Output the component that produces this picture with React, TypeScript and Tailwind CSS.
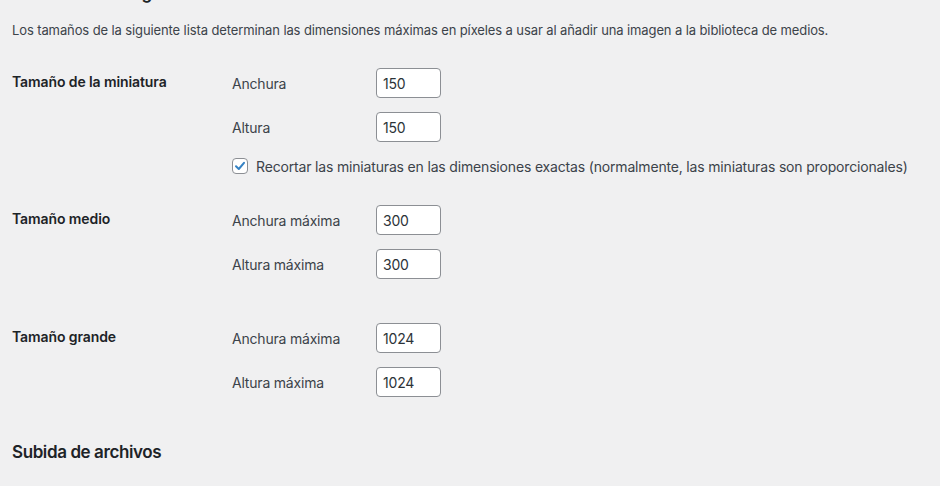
import React from "react";

const font = { fontFamily: "Inter, 'Noto Sans', sans-serif" };

function NumInput({ value }: { value: string }) {
  return (
    <input
      type="text"
      defaultValue={value}
      className="w-[65px] h-[30px] rounded-[4px] border border-[#8c8f94] bg-white pl-[6px] text-[14px] tracking-[-0.2px] text-[#2c3338] outline-none"
    />
  );
}

function Field({ label, value }: { label: string; value: string }) {
  return (
    <div className="flex items-center h-[30px]">
      <span className="w-[144px] text-[14px] tracking-[-0.2px] text-[#3c434a]">{label}</span>
      <NumInput value={value} />
    </div>
  );
}

function Row({
  title,
  children,
  pb,
}: {
  title: string;
  children: React.ReactNode;
  pb: string;
}) {
  return (
    <div className={`flex ${pb}`}>
      <div className="w-[220px] pt-[20px] text-[14px] leading-[18px] tracking-[-0.1px] font-semibold text-[#1d2327]">
        {title}
      </div>
      <div className="flex flex-col gap-[14px] pt-[15px]">{children}</div>
    </div>
  );
}

export default function App() {
  return (
    <div
      className="w-[940px] h-[486px] overflow-hidden bg-[#f0f0f1] px-[12px]"
      style={font}
    >
      <h2 className="mt-[-17px] h-[20px] leading-[20px] text-[17px] tracking-[-0.3px] font-semibold text-[#1d2327]">
        Tamaños de imagen
      </h2>
      <p className="mt-[17px] h-[20px] leading-[20px] text-[13px] tracking-[-0.11px] text-[#3c434a]">
        Los tamaños de la siguiente lista determinan las dimensiones máximas en píxeles a usar al añadir una imagen a la biblioteca de medios.
      </p>
      <div className="h-[13px]" />
      <Row title="Tamaño de la miniatura" pb="pb-[16px]">
        <Field label="Anchura" value="150" />
        <Field label="Altura" value="150" />
        <label className="flex items-center gap-[8px] mt-[2px] h-[16px] text-[14px] tracking-[-0.17px] text-[#3c434a]">
          <span className="flex items-center justify-center w-[16px] h-[16px] rounded-[4px] border border-[#8c8f94] bg-white">
            <svg width="14" height="14" viewBox="0 0 14 14">
              <path
                d="M3 7.2 L5.8 10 L11 3.8"
                fill="none"
                stroke="#3582c4"
                strokeWidth="2"
                strokeLinecap="round"
                strokeLinejoin="round"
              />
            </svg>
          </span>
          Recortar las miniaturas en las dimensiones exactas (normalmente, las miniaturas son proporcionales)
        </label>
      </Row>
      <Row title="Tamaño medio" pb="pb-[29px]">
        <Field label="Anchura máxima" value="300" />
        <Field label="Altura máxima" value="300" />
      </Row>
      <Row title="Tamaño grande" pb="pb-[43px]">
        <Field label="Anchura máxima" value="1024" />
        <Field label="Altura máxima" value="1024" />
      </Row>
      <h2 className="h-[24px] leading-[24px] text-[17px] tracking-[-0.4px] font-semibold text-[#1d2327]">
        Subida de archivos
      </h2>
    </div>
  );
}
